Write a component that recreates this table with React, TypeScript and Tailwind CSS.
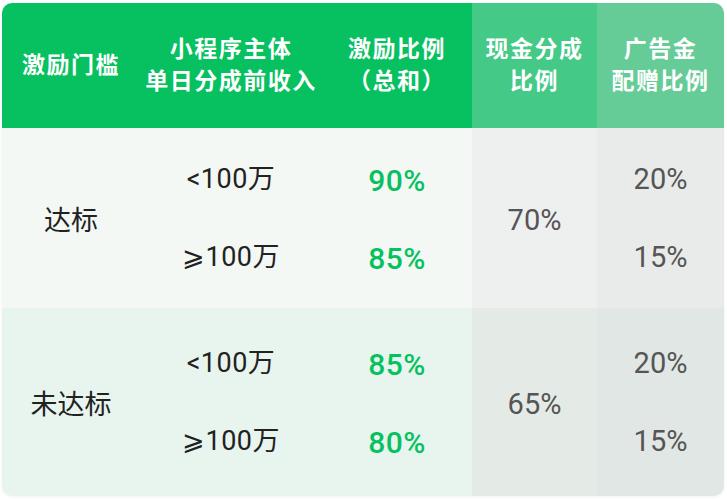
import React from "react";

const font = { fontFamily: "Roboto, 'Noto Sans CJK SC', sans-serif" };

function Two({ a, b, cls }: { a: string; b: string; cls: string }) {
  return (
    <div className={`flex flex-col items-center justify-center gap-[48px] ${cls}`}>
      <div className="leading-[30px] h-[30px]">{a}</div>
      <div className="leading-[30px] h-[30px]">{b}</div>
    </div>
  );
}

function BodyRow({
  label,
  a,
  b,
  pa,
  pb,
  cash,
  h,
  bg1,
  bg4,
  bg5,
}: {
  label: string;
  a: string;
  b: string;
  pa: string;
  pb: string;
  cash: string;
  h: string;
  bg1: string;
  bg4: string;
  bg5: string;
}) {
  return (
    <div className={`flex ${h}`}>
      <div className={`w-[138px] flex items-center justify-center pt-[6px] text-[27px] text-[#222] ${bg1}`}>
        {label}
      </div>
      <Two a={a} b={b} cls={`w-[182px] text-[27px] text-[#222] tracking-[0.5px] ${bg1}`} />
      <Two a={pa} b={pb} cls={`w-[150px] text-[30px] font-medium text-[#07c160] tracking-[0.5px] pt-[3px] ${bg1}`} />
      <div className={`w-[125px] flex items-center justify-center pt-[6px] text-[29px] text-[#555] ${bg4}`}>
        {cash}
      </div>
      <Two a="20%" b="15%" cls={`w-[127px] text-[29px] text-[#555] ${bg5}`} />
    </div>
  );
}

export default function App() {
  return (
    <div className="w-[727px] h-[499px] bg-white pt-[3px] pl-[2px]" style={font}>
      <div className="w-[722px] rounded-[10px] overflow-hidden shadow-[0_1px_3px_rgba(0,0,0,0.06)]">
        <div className="flex h-[125px] text-white font-bold text-[23px] leading-[32px] tracking-[1.5px] text-center">
          <div className="w-[138px] bg-[#07c160] flex items-center justify-center">激励门槛</div>
          <div className="w-[182px] bg-[#07c160] flex flex-col items-center justify-center">
            <div>小程序主体</div>
            <div>单日分成前收入</div>
          </div>
          <div className="w-[150px] bg-[#07c160] flex flex-col items-center justify-center">
            <div>激励比例</div>
            <div>（总和）</div>
          </div>
          <div className="w-[125px] bg-[#44c986] flex flex-col items-center justify-center">
            <div>现金分成</div>
            <div>比例</div>
          </div>
          <div className="w-[127px] bg-[#66cc97] flex flex-col items-center justify-center">
            <div>广告金</div>
            <div>配赠比例</div>
          </div>
        </div>
        <BodyRow
          label="达标"
          a="<100万"
          b="⩾100万"
          pa="90%"
          pb="85%"
          cash="70%"
          h="h-[180px]"
          bg1="bg-[#f3f8f5]"
          bg4="bg-[#eef0ef]"
          bg5="bg-[#e9ebea]"
        />
        <BodyRow
          label="未达标"
          a="<100万"
          b="⩾100万"
          pa="85%"
          pb="80%"
          cash="65%"
          h="h-[188px]"
          bg1="bg-[#e8f5ee]"
          bg4="bg-[#e4ebe7]"
          bg5="bg-[#e1e7e4]"
        />
      </div>
    </div>
  );
}
